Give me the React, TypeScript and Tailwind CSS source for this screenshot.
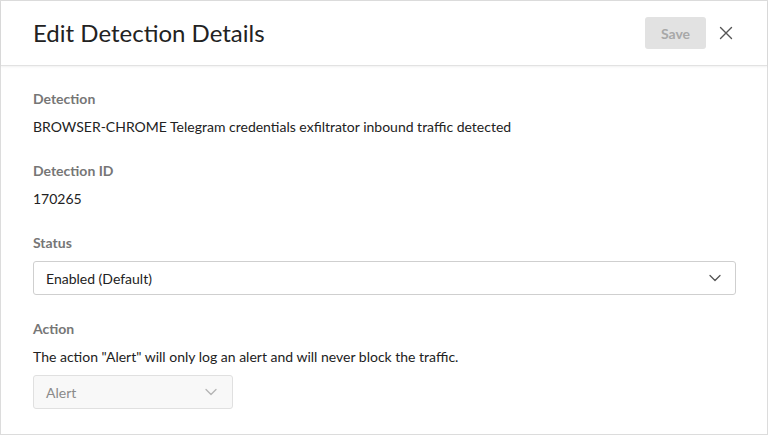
import React from "react";

function Chevron({ className }: { className?: string }) {
  return (
    <svg width="12" height="8" viewBox="0 0 12 8" fill="none" className={className}>
      <path d="M1 1.5L6 6.5L11 1.5" stroke="currentColor" strokeWidth="1.3" strokeLinecap="round" strokeLinejoin="round" />
    </svg>
  );
}

function Field({ label, children }: { label: string; children: React.ReactNode }) {
  return (
    <div className="flex flex-col">
      <div className="text-[14px] leading-[20px] font-bold text-[#767676]">{label}</div>
      {children}
    </div>
  );
}

export default function App() {
  return (
    <div
      className="w-[768px] h-[435px] bg-white border border-[#dcdcdc] flex flex-col text-[#222]"
      style={{ fontFamily: "Lato, 'Open Sans', sans-serif" }}
    >
      <header className="h-[65px] shrink-0 flex items-center pl-[32px] pr-[33px] border-b border-[#e2e2e2] shadow-[0_1px_2px_rgba(0,0,0,0.06)]">
        <h1 className="text-[24px] leading-[32px] font-normal text-[#222] flex-1">Edit Detection Details</h1>
        <button className="h-[32px] w-[61px] rounded-[3px] bg-[#e2e2e2] text-[#a8a8a8] text-[14px] font-bold">
          Save
        </button>
        <button className="ml-[12px] w-[16px] h-[16px] flex items-center justify-center text-[#555]">
          <svg width="14" height="14" viewBox="0 0 14 14" fill="none">
            <path d="M1.5 1.5L12.5 12.5M12.5 1.5L1.5 12.5" stroke="currentColor" strokeWidth="1.4" strokeLinecap="round" />
          </svg>
        </button>
      </header>

      <main className="flex flex-col gap-[24px] pl-[32px] pr-[31px] pt-[23px]">
        <Field label="Detection">
          <div className="mt-[8px] text-[14px] leading-[20px] text-[#222]">
            BROWSER-CHROME Telegram credentials exfiltrator inbound traffic detected
          </div>
        </Field>
        <Field label="Detection ID">
          <div className="mt-[8px] text-[14px] leading-[20px] text-[#222]">170265</div>
        </Field>
        <Field label="Status">
          <div className="mt-[8px] h-[34px] border border-[#cfcfcf] rounded-[3px] flex items-center justify-between pl-[12px] pr-[14px] text-[14px] text-[#222]">
            <span>Enabled (Default)</span>
            <Chevron className="text-[#555]" />
          </div>
        </Field>
        <Field label="Action">
          <div className="mt-[8px] text-[14px] leading-[20px] text-[#222]">
            The action "Alert" will only log an alert and will never block the traffic.
          </div>
          <div className="mt-[8px] w-[200px] h-[34px] border border-[#e0e0e0] bg-[#f8f8f8] rounded-[3px] flex items-center justify-between pl-[12px] pr-[15px] text-[14px] text-[#8a8a8a]">
            <span>Alert</span>
            <Chevron className="text-[#b5b5b5]" />
          </div>
        </Field>
      </main>
    </div>
  );
}
